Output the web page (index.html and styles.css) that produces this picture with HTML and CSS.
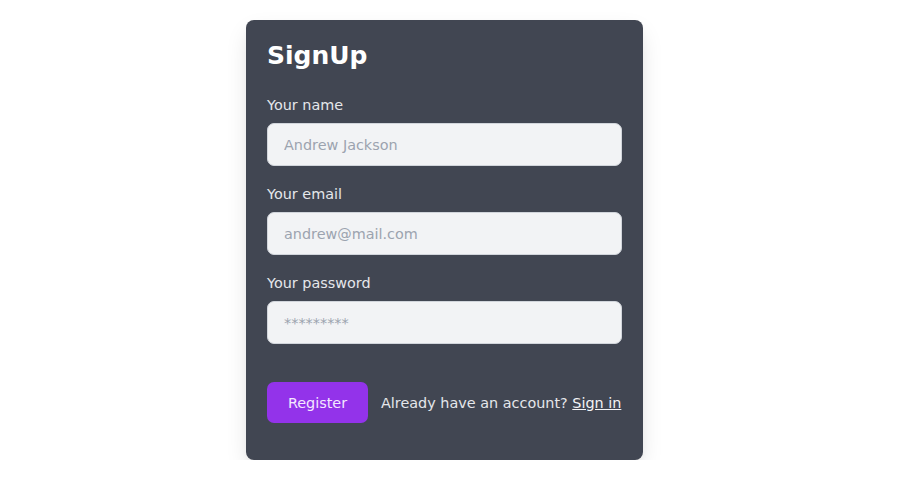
FILE: index.html
```html
<!DOCTYPE html>
<html lang="en">
<head>
<meta charset="utf-8">
<title>SignUp</title>
<link rel="stylesheet" href="styles.css">
</head>
<body>
<main class="page">
  <form class="card">
    <h2 class="title">SignUp</h2>
    <div class="fields">
      <div class="field">
        <label class="label" for="name">Your name</label>
        <input class="input" id="name" type="text" placeholder="Andrew Jackson">
      </div>
      <div class="field">
        <label class="label" for="email">Your email</label>
        <input class="input" id="email" type="email" placeholder="andrew@mail.com">
      </div>
      <div class="field">
        <label class="label" for="password">Your password</label>
        <input class="input" id="password" type="password" placeholder="*********">
      </div>
    </div>
    <div class="actions">
      <button class="btn" type="button">Register</button>
      <p class="note">Already have an account? <a class="link" href="#">Sign in</a></p>
    </div>
  </form>
</main>
</body>
</html>
```

FILE: styles.css
```css
* { box-sizing: border-box; }

html, body {
  margin: 0;
  background: #ffffff;
  font-family: "DejaVu Sans", sans-serif;
}

.page {
  padding: 20px 0 0 246px;
  display: flex;
  align-items: flex-start;
}

.card {
  width: 397px;
  background: #414652;
  border-radius: 8px;
  padding: 21px 21px 37px;
  box-shadow: 0 10px 25px -4px rgba(0, 0, 0, 0.14), 0 4px 8px -4px rgba(0, 0, 0, 0.1);
  display: flex;
  flex-direction: column;
}

.title {
  margin: 0 0 26px;
  font-size: 25px;
  line-height: 30px;
  font-weight: bold;
  color: #ffffff;
}

.fields {
  display: flex;
  flex-direction: column;
  gap: 20px;
}

.field {
  display: flex;
  flex-direction: column;
}

.label {
  font-size: 14.4px;
  line-height: 17px;
  color: #e5e7eb;
  margin-bottom: 9px;
}

.input {
  height: 43px;
  width: 100%;
  padding: 12px 16px;
  font-family: "DejaVu Sans", sans-serif;
  font-size: 14.4px;
  color: #111827;
  background: #f2f3f5;
  border: 1px solid #d1d5db;
  border-radius: 7px;
  outline: none;
}

.input::placeholder { color: #9ca3af; }

.actions {
  margin-top: 38px;
  display: flex;
  align-items: center;
  gap: 13px;
}

.btn {
  height: 41px;
  width: 101px;
  padding: 0;
  font-family: "DejaVu Sans", sans-serif;
  font-size: 14.4px;
  color: #f3e8ff;
  background: #9333ea;
  border: none;
  border-radius: 7px;
}

.note {
  margin: 0;
  font-size: 14.4px;
  color: #e5e7eb;
  white-space: nowrap;
}

.link {
  color: #f3f4f6;
  text-decoration: underline;
}
```
